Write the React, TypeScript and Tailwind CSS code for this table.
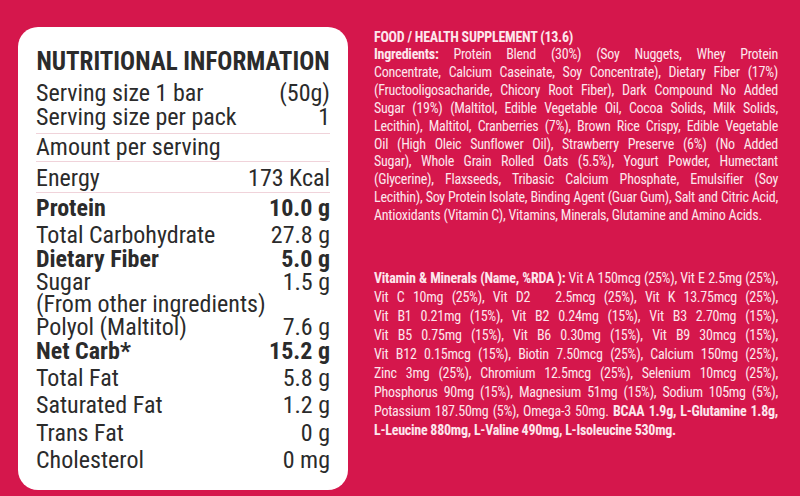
const narrow = {
  fontFamily:
    '"Roboto Condensed", "Liberation Sans Narrow", "DejaVu Sans Condensed", "Liberation Sans", sans-serif',
};

type Row = { label: string; value?: string; bold?: boolean; h: number };

const topRows: Row[] = [
  { label: "Protein", value: "10.0 g", bold: true, h: 28 },
  { label: "Total Carbohydrate", value: "27.8 g", h: 26 },
  { label: "Dietary Fiber", value: "5.0 g", bold: true, h: 23 },
  { label: "Sugar", value: "1.5 g", h: 22 },
  { label: "(From other ingredients)", h: 23 },
  { label: "Polyol (Maltitol)", value: "7.6 g", h: 23 },
  { label: "Net Carb*", value: "15.2 g", bold: true, h: 25 },
  { label: "Total Fat", value: "5.8 g", h: 28 },
  { label: "Saturated Fat", value: "1.2 g", h: 27 },
  { label: "Trans Fat", value: "0 g", h: 28 },
  { label: "Cholesterol", value: "0 mg", h: 27 },
];

const ingredients: { b?: string; t: string }[] = [
  { b: "Ingredients:", t: " Protein Blend (30%) (Soy Nuggets, Whey Protein" },
  { t: "Concentrate, Calcium Caseinate, Soy Concentrate), Dietary Fiber (17%)" },
  { t: "(Fructooligosacharide, Chicory Root Fiber), Dark Compound No Added" },
  { t: "Sugar (19%) (Maltitol, Edible Vegetable Oil, Cocoa Solids, Milk Solids," },
  { t: "Lecithin), Maltitol, Cranberries (7%), Brown Rice Crispy, Edible Vegetable" },
  { t: "Oil (High Oleic Sunflower Oil), Strawberry Preserve (6%) (No Added" },
  { t: "Sugar), Whole Grain Rolled Oats (5.5%), Yogurt Powder, Humectant" },
  { t: "(Glycerine), Flaxseeds, Tribasic Calcium Phosphate, Emulsifier (Soy" },
  { t: "Lecithin), Soy Protein Isolate, Binding Agent (Guar Gum), Salt and Citric Acid," },
];

const vitamins = [
  "Vit C 10mg (25%), Vit D2\u00a0\u00a0 2.5mcg (25%), Vit K 13.75mcg (25%),",
  "Vit B1 0.21mg (15%), Vit B2 0.24mg (15%), Vit B3 2.70mg (15%),",
  "Vit B5 0.75mg (15%), Vit B6 0.30mg (15%), Vit B9 30mcg (15%),",
  "Vit B12 0.15mcg (15%), Biotin 7.50mcg (25%), Calcium 150mg (25%),",
  "Zinc 3mg (25%), Chromium 12.5mcg (25%), Selenium 10mcg (25%),",
  "Phosphorus 90mg (15%), Magnesium 51mg (15%), Sodium 105mg (5%),",
];

function NutritionCard() {
  return (
    <div className="ml-[18px] mt-[27px] w-[330px] h-[463px] shrink-0 rounded-[20px] bg-white px-[18px] pt-[22px] text-[#2b2b2b]">
      <div className="h-[25px] leading-[25px] text-[25px] font-bold text-center whitespace-nowrap">
        NUTRITIONAL INFORMATION
      </div>

      <div className="mt-[7px] border-b border-[#f0d3da] pb-[4px] text-[24px] leading-[24px]">
        <div className="flex justify-between">
          <span>Serving size 1 bar</span>
          <span>(50g)</span>
        </div>
        <div className="flex justify-between">
          <span>Serving size per pack</span>
          <span>1</span>
        </div>
      </div>

      <div className="h-[28px] leading-[27px] border-b border-[#f0d3da] text-[24px]">
        Amount per serving
      </div>

      <div className="flex justify-between h-[31px] leading-[32px] border-b border-[#f0d3da] text-[24px]">
        <span>Energy</span>
        <span>173 Kcal</span>
      </div>

      <div className="pt-[1px] text-[24px]">
        {topRows.map((r) => (
          <div
            key={r.label}
            className={`flex justify-between whitespace-nowrap ${r.bold ? "font-bold" : ""}`}
            style={{ height: r.h, lineHeight: `${r.h}px` }}
          >
            <span>{r.label}</span>
            {r.value && <span>{r.value}</span>}
          </div>
        ))}
      </div>
    </div>
  );
}

function Justified({ children, last }: { children: React.ReactNode; last?: boolean }) {
  return (
    <div className={`whitespace-nowrap ${last ? "" : "text-justify [text-align-last:justify]"}`}>
      {children}
    </div>
  );
}

export default function App() {
  return (
    <div className="w-[800px] h-[496px] overflow-hidden bg-[#d5174c] flex" style={narrow}>
      <NutritionCard />

      <div className="ml-[26px] w-[404px] text-[#fde6ec] text-[14px] tracking-[-0.25px]">
        <div className="mt-[28px] h-[18px] leading-[18px] font-bold">
          FOOD / HEALTH SUPPLEMENT (13.6)
        </div>

        <div className="leading-[17.9px]">
          {ingredients.map((l, i) => (
            <Justified key={i}>
              {l.b && <b>{l.b}</b>}
              {l.t}
            </Justified>
          ))}
          <Justified last>
            Antioxidants (Vitamin C), Vitamins, Minerals, Glutamine and Amino Acids.
          </Justified>
        </div>

        <div className="mt-[44px] leading-[19px]">
          <Justified>
            <b>Vitamin &amp; Minerals (Name, %RDA ):</b> Vit A 150mcg (25%), Vit E 2.5mg (25%),
          </Justified>
          {vitamins.map((v) => (
            <Justified key={v}>{v}</Justified>
          ))}
          <Justified>
            Potassium 187.50mg (5%), Omega-3 50mg. <b>BCAA 1.9g, L-Glutamine 1.8g,</b>
          </Justified>
          <Justified last>
            <b>L-Leucine 880mg, L-Valine 490mg, L-Isoleucine 530mg.</b>
          </Justified>
        </div>
      </div>
    </div>
  );
}
